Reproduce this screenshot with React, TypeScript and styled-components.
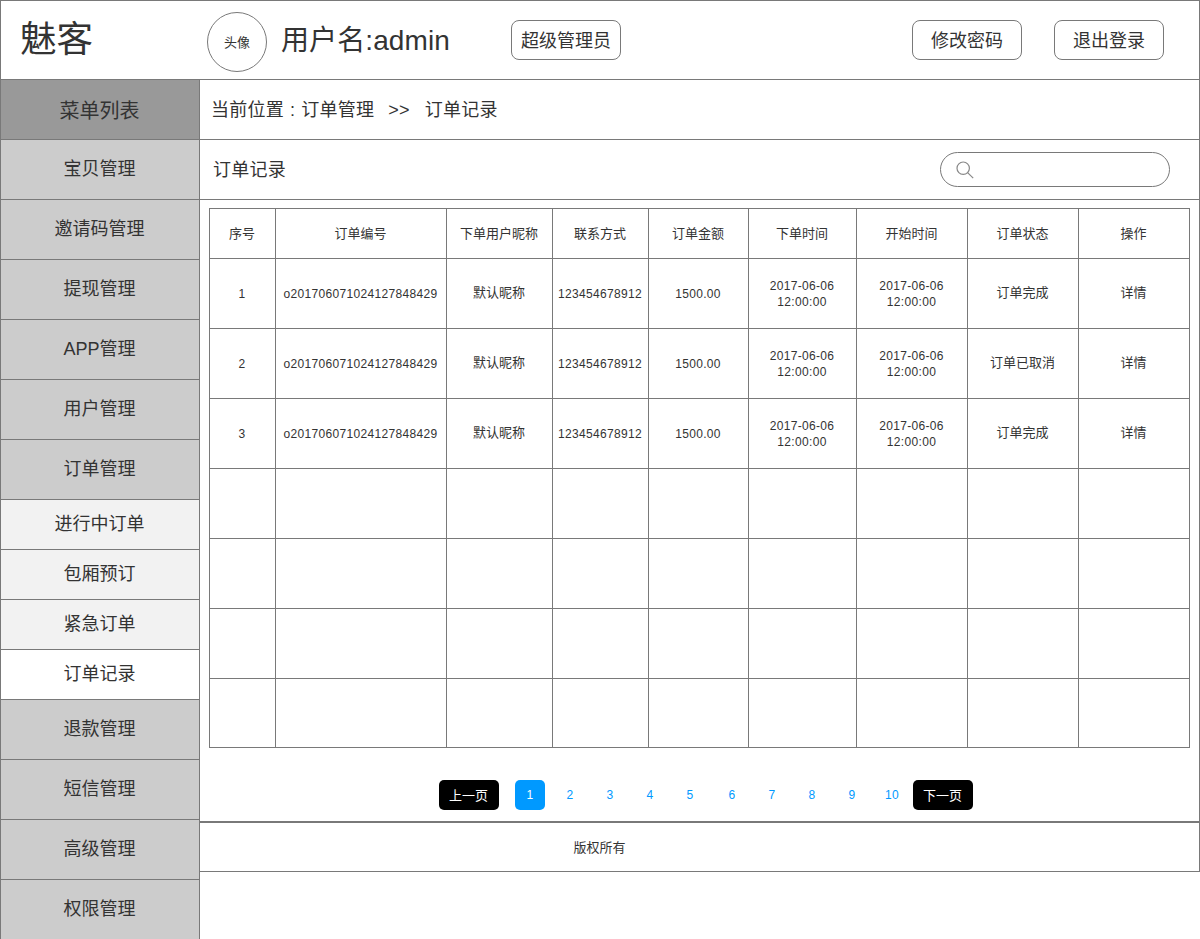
import styled, { createGlobalStyle } from "styled-components";

const LINE = "#797979";
const FONT = '"Liberation Sans", "Noto Sans CJK SC", sans-serif';

const GlobalStyle = createGlobalStyle`
  html, body {
    margin: 0;
    padding: 0;
    background: #fff;
    overflow: hidden;
  }
  * {
    box-sizing: border-box;
  }
`;

const Page = styled.div`
  width: 1200px;
  height: 939px;
  overflow: hidden;
  font-family: ${FONT};
  color: #333;
`;

const Header = styled.header`
  display: flex;
  align-items: center;
  height: 80px;
  border: 1px solid ${LINE};
`;

const Logo = styled.div`
  width: 206px;
  padding-left: 19px;
  font-size: 36.5px;
  line-height: 1;
`;

const Avatar = styled.div`
  display: flex;
  align-items: center;
  justify-content: center;
  width: 60px;
  height: 60px;
  margin-top: 4px;
  padding-bottom: 2px;
  border: 1px solid ${LINE};
  border-radius: 50%;
  font-size: 13px;
`;

const UserName = styled.div`
  width: 230px;
  margin-left: 14px;
  padding-bottom: 4px;
  font-size: 28px;
  letter-spacing: 0.1px;
`;

const OutlineButton = styled.button<{ $gap?: number }>`
  height: 40px;
  width: 110px;
  margin-left: ${({ $gap }) => $gap ?? 0}px;
  padding: 0 0 2px;
  border: 1px solid ${LINE};
  border-radius: 8px;
  background: #fff;
  color: #333;
  font-family: ${FONT};
  font-size: 18px;
`;

const Body = styled.div`
  display: flex;
`;

const Sidebar = styled.nav`
  flex: none;
  width: 200px;
  border-left: 1px solid ${LINE};
  border-right: 1px solid ${LINE};
`;

const MenuTitle = styled.div`
  display: flex;
  align-items: center;
  justify-content: center;
  height: 60px;
  padding-right: 1px;
  border-bottom: 1px solid ${LINE};
  background: #999;
  font-size: 20px;
`;

const MenuItem = styled.div<{ $level: "top" | "sub" | "active" }>`
  display: flex;
  align-items: center;
  justify-content: center;
  height: ${({ $level }) => ($level === "top" ? 60 : 50)}px;
  padding: 0 1px 5px 0;
  border-bottom: 1px solid ${LINE};
  background: ${({ $level }) =>
    $level === "top" ? "#ccc" : $level === "sub" ? "#f2f2f2" : "#fff"};
  font-size: 18px;
`;

const Main = styled.main`
  flex: 1;
  min-width: 0;
  border-right: 1px solid ${LINE};
  align-self: flex-start;
`;

const Breadcrumb = styled.div`
  height: 60px;
  padding-left: 11px;
  border-bottom: 1px solid ${LINE};
  font-size: 18px;
  line-height: 61px;
  letter-spacing: 0.25px;
`;

const Colon = styled.span`
  margin: 0 6px 0 6px;
`;

const Arrows = styled.span`
  margin: 0 15px 0 14px;
`;

const TitleBar = styled.div`
  display: flex;
  align-items: center;
  justify-content: space-between;
  height: 60px;
  padding: 0 29px 0 13px;
  border-bottom: 1px solid ${LINE};
  font-size: 18px;
  letter-spacing: 0.25px;
`;

const TitleText = styled.span`
  padding-bottom: 4px;
`;

const SearchBox = styled.div`
  display: flex;
  align-items: center;
  width: 230px;
  height: 35px;
  padding-left: 15px;
  border: 1px solid ${LINE};
  border-radius: 18px;
`;

const TableWrap = styled.div`
  padding: 8px 9px 0;
`;

const OrderTable = styled.table`
  width: 981px;
  border-collapse: collapse;
  table-layout: fixed;
  font-size: 13px;

  tbody tr:last-child td {
    height: 69px;
  }
`;

const Column = styled.col<{ $w: number }>`
  width: ${({ $w }) => $w}px;
`;

const HeadCell = styled.th`
  height: 50px;
  padding: 0 1px 3px 0;
  border: 1px solid ${LINE};
  font-weight: 400;
  text-align: center;
`;

const Cell = styled.td`
  height: 70px;
  padding: 0 1px 1px 0;
  border: 1px solid ${LINE};
  line-height: 16px;
  text-align: center;
`;

const DigitCell = styled(Cell)`
  padding: 0 1px 0 0;
  font-size: 12px;
  letter-spacing: 0.33px;
`;

const Pager = styled.div`
  display: flex;
  align-items: flex-start;
  height: 73px;
  padding: 32px 0 0 239px;
`;

const PagerButton = styled.button<{ $gap: number }>`
  width: 60px;
  height: 30px;
  margin-left: ${({ $gap }) => $gap}px;
  padding: 0 1px 2px 0;
  border: 0;
  border-radius: 5px;
  background: #000;
  color: #fff;
  font-family: ${FONT};
  font-size: 13px;
`;

const PageNumber = styled.div<{ $active?: boolean; $gap: number }>`
  display: flex;
  align-items: center;
  justify-content: center;
  width: 30px;
  height: 30px;
  margin-left: ${({ $gap }) => $gap}px;
  border-radius: 5px;
  background: ${({ $active }) => ($active ? "#0099ff" : "transparent")};
  color: ${({ $active }) => ($active ? "#fff" : "#0099ff")};
  font-size: 12px;
  letter-spacing: 0.33px;
`;

const Footer = styled.footer`
  display: flex;
  align-items: center;
  justify-content: center;
  height: 51px;
  padding: 0 200px 2px 0;
  border-top: 2px solid ${LINE};
  border-bottom: 1px solid ${LINE};
  font-size: 13px;
`;

const widths = [66, 171, 106, 96, 100, 108, 111, 111, 111];
const headings = ["序号", "订单编号", "下单用户昵称", "联系方式", "订单金额", "下单时间", "开始时间", "订单状态", "操作"];
const orders = [
  { id: 1, status: "订单完成" },
  { id: 2, status: "订单已取消" },
  { id: 3, status: "订单完成" },
];
const topMenu = ["宝贝管理", "邀请码管理", "提现管理", "APP管理", "用户管理", "订单管理"];
const subMenu = ["进行中订单", "包厢预订", "紧急订单"];
const bottomMenu = ["退款管理", "短信管理", "高级管理", "权限管理"];

function SearchIcon() {
  return (
    <svg width="18" height="18" viewBox="0 0 18 18" fill="none" stroke="#888" strokeWidth="1.2">
      <circle cx="7.2" cy="7.2" r="6.2" />
      <path d="M11.6 11.6 L17.2 17.2" />
    </svg>
  );
}

export default function App() {
  return (
    <Page>
      <GlobalStyle />
      <Header>
        <Logo>魅客</Logo>
        <Avatar>头像</Avatar>
        <UserName>用户名:admin</UserName>
        <OutlineButton>超级管理员</OutlineButton>
        <OutlineButton $gap={291}>修改密码</OutlineButton>
        <OutlineButton $gap={32}>退出登录</OutlineButton>
      </Header>
      <Body>
        <Sidebar>
          <MenuTitle>菜单列表</MenuTitle>
          {topMenu.map((label) => (
            <MenuItem key={label} $level="top">{label}</MenuItem>
          ))}
          {subMenu.map((label) => (
            <MenuItem key={label} $level="sub">{label}</MenuItem>
          ))}
          <MenuItem $level="active">订单记录</MenuItem>
          {bottomMenu.map((label) => (
            <MenuItem key={label} $level="top">{label}</MenuItem>
          ))}
        </Sidebar>
        <Main>
          <Breadcrumb>
            当前位置<Colon>:</Colon>订单管理<Arrows>{">>"}</Arrows>订单记录
          </Breadcrumb>
          <TitleBar>
            <TitleText>订单记录</TitleText>
            <SearchBox>
              <SearchIcon />
            </SearchBox>
          </TitleBar>
          <TableWrap>
            <OrderTable>
              <colgroup>
                {widths.map((w, i) => (
                  <Column key={i} $w={w} />
                ))}
              </colgroup>
              <thead>
                <tr>
                  {headings.map((h) => (
                    <HeadCell key={h}>{h}</HeadCell>
                  ))}
                </tr>
              </thead>
              <tbody>
                {orders.map((o) => (
                  <tr key={o.id}>
                    <DigitCell>{o.id}</DigitCell>
                    <DigitCell>o201706071024127848429</DigitCell>
                    <Cell>默认昵称</Cell>
                    <DigitCell>123454678912</DigitCell>
                    <DigitCell>1500.00</DigitCell>
                    <DigitCell>2017-06-06<br />12:00:00</DigitCell>
                    <DigitCell>2017-06-06<br />12:00:00</DigitCell>
                    <Cell>{o.status}</Cell>
                    <Cell>详情</Cell>
                  </tr>
                ))}
                {[0, 1, 2, 3].map((r) => (
                  <tr key={r}>
                    {widths.map((_, i) => (
                      <Cell key={i} />
                    ))}
                  </tr>
                ))}
              </tbody>
            </OrderTable>
          </TableWrap>
          <Pager>
            <PagerButton $gap={0}>上一页</PagerButton>
            {[1, 2, 3, 4, 5, 6, 7, 8, 9, 10].map((n) => (
              <PageNumber key={n} $active={n === 1} $gap={n === 1 ? 16 : n === 6 ? 12 : 10}>
                {n}
              </PageNumber>
            ))}
            <PagerButton $gap={6}>下一页</PagerButton>
          </Pager>
          <Footer>版权所有</Footer>
        </Main>
      </Body>
    </Page>
  );
}
